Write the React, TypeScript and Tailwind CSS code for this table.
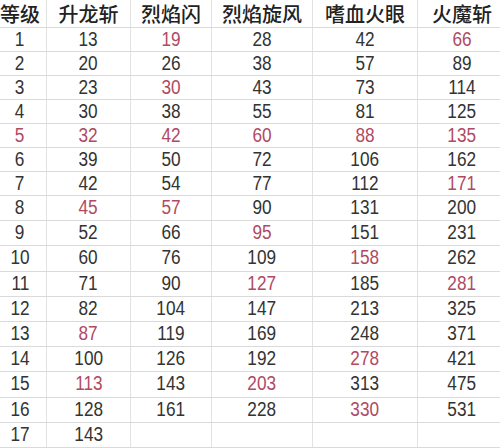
import React from "react";

const header = ["等级", "升龙斩", "烈焰闪", "烈焰旋风", "嗜血火眼", "火魔斩"];

const data: string[][] = [
  ["1", "13", "*19", "28", "42", "*66"],
  ["2", "20", "26", "38", "57", "89"],
  ["3", "23", "*30", "43", "73", "114"],
  ["4", "30", "38", "55", "81", "125"],
  ["*5", "*32", "*42", "*60", "*88", "*135"],
  ["6", "39", "50", "72", "106", "162"],
  ["7", "42", "54", "77", "112", "*171"],
  ["8", "*45", "*57", "90", "131", "200"],
  ["9", "52", "66", "*95", "151", "231"],
  ["10", "60", "76", "109", "*158", "262"],
  ["11", "71", "90", "*127", "185", "*281"],
  ["12", "82", "104", "147", "213", "325"],
  ["13", "*87", "119", "169", "248", "371"],
  ["14", "100", "126", "192", "*278", "421"],
  ["15", "*113", "143", "*203", "313", "475"],
  ["16", "128", "161", "228", "*330", "531"],
  ["17", "143", "", "", "", ""],
];

const widths = ["w-[47px] pr-[6px]", "w-[84px]", "w-[81px]", "w-[101px]", "w-[105px]", "w-[82px] pl-[6px]"];

export default function App() {
  return (
    <div className="w-[500px] h-[448px] overflow-hidden bg-white">
      <div
        className="flex h-[28px] border-b border-[#dadada]"
        style={{ fontFamily: '"Noto Sans CJK SC", sans-serif' }}
      >
        {header.map((h, i) => (
          <div
            key={i}
            className={`${widths[i]} shrink-0 flex items-center justify-center text-[20px] font-medium text-[#222] leading-none ${i < 5 ? "border-r border-[#e2e2e2]" : ""}`}
          >
            {h}
          </div>
        ))}
      </div>
      {data.map((row, r) => (
        <div
          key={r}
          className={`flex border-b border-[#dadada] ${r < 7 ? "h-[24px]" : "h-[25.2px]"}`}
          style={{ fontFamily: '"Liberation Sans", Arial, sans-serif' }}
        >
          {row.map((c, i) => {
            const red = c.startsWith("*");
            const v = red ? c.slice(1) : c;
            return (
              <div
                key={i}
                className={`${widths[i]} shrink-0 flex items-center justify-center pb-[2px] text-[20px] leading-none ${red ? "text-[#b04a62]" : "text-[#333]"} ${i < 5 ? "border-r border-[#e2e2e2]" : ""}`}
              >
                <span className="inline-block scale-x-[0.86]">{v}</span>
              </div>
            );
          })}
        </div>
      ))}
    </div>
  );
}
